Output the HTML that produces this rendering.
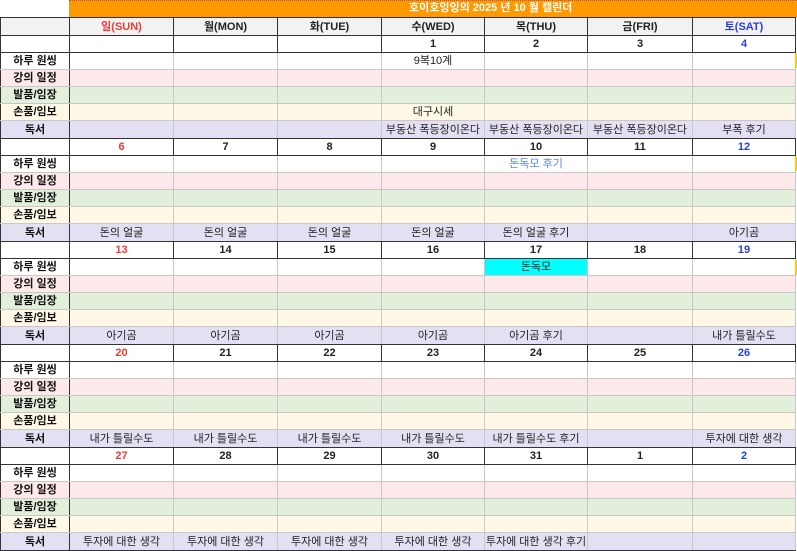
<!DOCTYPE html>
<html><head><meta charset="utf-8"><style>
body{margin:0;background:#fff;width:797px;height:549px;overflow:hidden;position:relative;font-family:"Liberation Sans","Noto Sans CJK KR",sans-serif;}
.title{position:absolute;left:69px;top:0;width:728px;height:17px;background:#ff9900;border-top:1px dotted #b06000;box-sizing:border-box;}
.title span{position:absolute;left:340px;top:0px;color:#fff;font-weight:bold;font-size:11px;line-height:15px;white-space:nowrap;}
table{position:absolute;left:0;top:17px;border-collapse:collapse;table-layout:fixed;width:796px;}
td{padding:0;height:16px;font-size:11px;line-height:16px;text-align:center;white-space:nowrap;overflow:hidden;color:#222;border-left:1px solid #c8c8c8;border-right:1px solid #c8c8c8;border-bottom:1px solid #c8c8c8;}
td:first-child{border-left:1px solid #333;border-right:1px solid #333;font-weight:bold;color:#111;}
tr.h td{background:#f2f2f2;font-weight:bold;border:1px solid #333;height:17px;}
tr.d td{font-weight:bold;border:1px solid #333;height:16px;}
tr.a td{background:#fff;}
tr.b td{background:#fde9e9;}
tr.c td{background:#e2efda;}
tr.e td{background:#fff8e6;}
tr.f td{background:#e4e0f4;border-bottom:1px solid #333;height:17px;}
.r{color:#f03a3a!important}.bl{color:#2b3fe0!important}
.lb{color:#5b87e0!important}
.cy{background:#00ffff!important}
.ym{position:absolute;left:795px;width:2px;height:15px;background:#f5d000;}
</style></head><body>
<div class="title"><span>호이호잉잉의 2025 년 10 월 캘린더</span></div>
<table>
<colgroup><col style="width:69px"><col style="width:104px"><col style="width:104px"><col style="width:104px"><col style="width:103px"><col style="width:103px"><col style="width:105px"><col style="width:103px"></colgroup>
<tr class="h"><td></td><td class="r">일(SUN)</td><td>월(MON)</td><td>화(TUE)</td><td>수(WED)</td><td>목(THU)</td><td>금(FRI)</td><td class="bl">토(SAT)</td></tr>

<tr class="d"><td></td><td></td><td></td><td></td><td>1</td><td>2</td><td>3</td><td class="bl">4</td></tr>
<tr class="a"><td>하루 원씽</td><td></td><td></td><td></td><td>9복10계</td><td></td><td></td><td></td></tr>
<tr class="b"><td>강의 일정</td><td></td><td></td><td></td><td></td><td></td><td></td><td></td></tr>
<tr class="c"><td>발품/임장</td><td></td><td></td><td></td><td></td><td></td><td></td><td></td></tr>
<tr class="e"><td>손품/임보</td><td></td><td></td><td></td><td>대구시세</td><td></td><td></td><td></td></tr>
<tr class="f"><td>독서</td><td></td><td></td><td></td><td>부동산 폭등장이온다</td><td>부동산 폭등장이온다</td><td>부동산 폭등장이온다</td><td>부폭 후기</td></tr>

<tr class="d"><td></td><td class="r">6</td><td>7</td><td>8</td><td>9</td><td>10</td><td>11</td><td class="bl">12</td></tr>
<tr class="a"><td>하루 원씽</td><td></td><td></td><td></td><td></td><td class="lb">돈독모 후기</td><td></td><td></td></tr>
<tr class="b"><td>강의 일정</td><td></td><td></td><td></td><td></td><td></td><td></td><td></td></tr>
<tr class="c"><td>발품/임장</td><td></td><td></td><td></td><td></td><td></td><td></td><td></td></tr>
<tr class="e"><td>손품/임보</td><td></td><td></td><td></td><td></td><td></td><td></td><td></td></tr>
<tr class="f"><td>독서</td><td>돈의 얼굴</td><td>돈의 얼굴</td><td>돈의 얼굴</td><td>돈의 얼굴</td><td>돈의 얼굴 후기</td><td></td><td>아기곰</td></tr>

<tr class="d"><td></td><td class="r">13</td><td>14</td><td>15</td><td>16</td><td>17</td><td>18</td><td class="bl">19</td></tr>
<tr class="a"><td>하루 원씽</td><td></td><td></td><td></td><td></td><td class="cy">돈독모</td><td></td><td></td></tr>
<tr class="b"><td>강의 일정</td><td></td><td></td><td></td><td></td><td></td><td></td><td></td></tr>
<tr class="c"><td>발품/임장</td><td></td><td></td><td></td><td></td><td></td><td></td><td></td></tr>
<tr class="e"><td>손품/임보</td><td></td><td></td><td></td><td></td><td></td><td></td><td></td></tr>
<tr class="f"><td>독서</td><td>아기곰</td><td>아기곰</td><td>아기곰</td><td>아기곰</td><td>아기곰 후기</td><td></td><td>내가 틀릴수도</td></tr>

<tr class="d"><td></td><td class="r">20</td><td>21</td><td>22</td><td>23</td><td>24</td><td>25</td><td class="bl">26</td></tr>
<tr class="a"><td>하루 원씽</td><td></td><td></td><td></td><td></td><td></td><td></td><td></td></tr>
<tr class="b"><td>강의 일정</td><td></td><td></td><td></td><td></td><td></td><td></td><td></td></tr>
<tr class="c"><td>발품/임장</td><td></td><td></td><td></td><td></td><td></td><td></td><td></td></tr>
<tr class="e"><td>손품/임보</td><td></td><td></td><td></td><td></td><td></td><td></td><td></td></tr>
<tr class="f"><td>독서</td><td>내가 틀릴수도</td><td>내가 틀릴수도</td><td>내가 틀릴수도</td><td>내가 틀릴수도</td><td>내가 틀릴수도 후기</td><td></td><td>투자에 대한 생각</td></tr>

<tr class="d"><td></td><td class="r">27</td><td>28</td><td>29</td><td>30</td><td>31</td><td>1</td><td class="bl">2</td></tr>
<tr class="a"><td>하루 원씽</td><td></td><td></td><td></td><td></td><td></td><td></td><td></td></tr>
<tr class="b"><td>강의 일정</td><td></td><td></td><td></td><td></td><td></td><td></td><td></td></tr>
<tr class="c"><td>발품/임장</td><td></td><td></td><td></td><td></td><td></td><td></td><td></td></tr>
<tr class="e"><td>손품/임보</td><td></td><td></td><td></td><td></td><td></td><td></td><td></td></tr>
<tr class="f"><td>독서</td><td>투자에 대한 생각</td><td>투자에 대한 생각</td><td>투자에 대한 생각</td><td>투자에 대한 생각</td><td>투자에 대한 생각 후기</td><td></td><td></td></tr>
</table>
<div class="ym" style="top:53px"></div>
<div class="ym" style="top:156px"></div>
<div class="ym" style="top:260px"></div>
</body></html>
